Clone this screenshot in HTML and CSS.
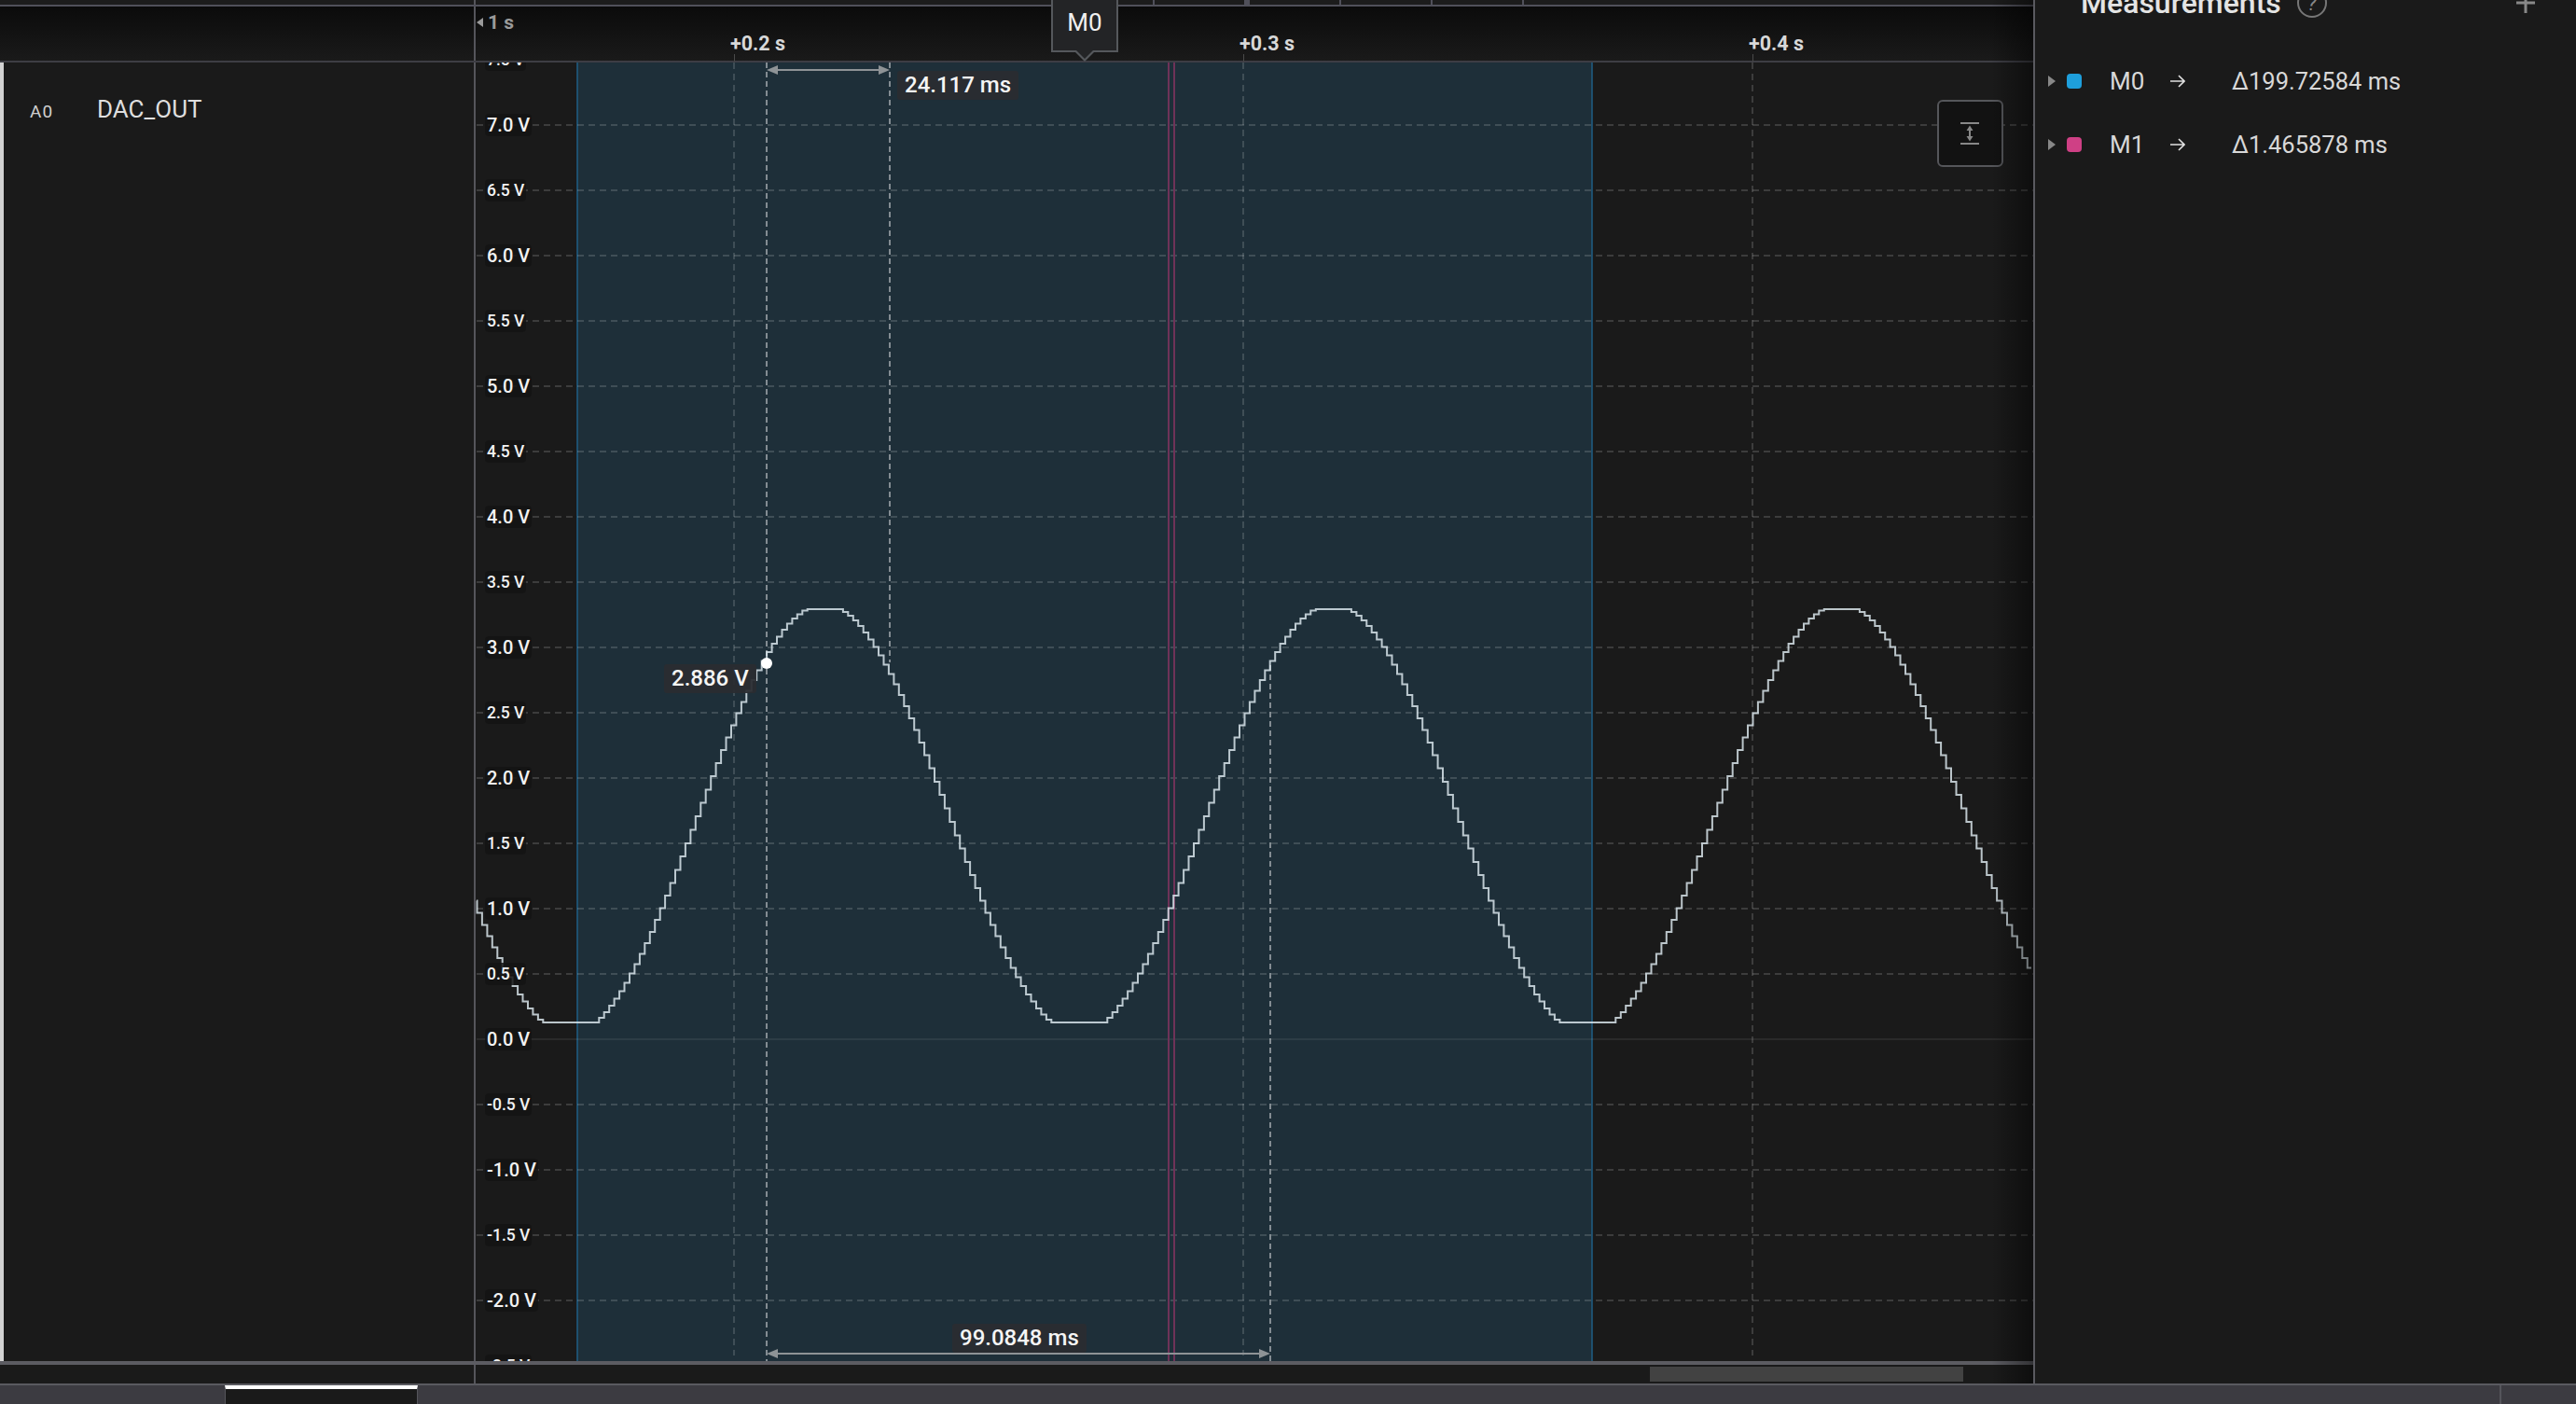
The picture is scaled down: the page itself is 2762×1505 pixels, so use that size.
FILE: index.html
```html
<!DOCTYPE html>
<html lang="en">
<head>
    <meta charset="UTF-8">
    <meta name="viewport" content="width=device-width, initial-scale=1.0">
    <title>Logic Analyzer Capture</title>
    <link rel="stylesheet" href="styles.css">
</head>
<body>
    <div class="main">
        <div class="capture">
            <div class="row strip">
                <div class="side"></div>
                <div class="strip-marks">
                    <span class="strip-mark"></span>
                    <span class="strip-mark thick"></span>
                    <span class="strip-mark"></span>
                    <span class="strip-mark"></span>
                    <span class="strip-mark"></span>
                </div>
            </div>

            <div class="row ruler">
                <div class="side"></div>
                <div class="ruler-track" id="rulerTrack">
                    <div class="ruler-origin"><span class="origin-arrow"></span>1 s</div>
                </div>
            </div>

            <div class="row traces">
                <div class="side channel">
                    <span class="channel-id">A0</span>
                    <span class="channel-name">DAC_OUT</span>
                </div>
                <div class="plot" id="plot">
                    <svg class="plot-svg" id="plotSvg" viewBox="510 67 1670 1392" width="1670" height="1392"></svg>
                    <div class="readout readout-top">24.117 ms</div>
                    <div class="readout readout-bottom">99.0848 ms</div>
                    <div class="readout readout-point">2.886 V</div>
                    <span class="point-dot"></span>
                    <button class="fit-button" aria-label="Fit height">
                        <svg width="22" height="26" viewBox="0 0 22 26">
                            <path class="fit-stroke" d="M1 2H21M1 24H21M11 7V19"/>
                            <path class="fit-fill" d="M11 4.500L14.500 10H7.500ZM11 21.500L14.500 16H7.500Z"/>
                        </svg>
                    </button>
                </div>
            </div>

            <div class="row scroller">
                <div class="side"></div>
                <div class="scroll-track"><span class="scroll-thumb"></span></div>
            </div>

            <div class="marker-flag">M0</div>
            <div class="edge-shade"></div>
        </div>

        <aside class="panel">
            <div class="panel-head">
                <h2 class="panel-title">Measurements</h2>
                <span class="help">?</span>
                <svg class="add" width="20" height="20" viewBox="0 0 20 20"><path d="M0 5H20M10 -5V16"/></svg>
            </div>
            <ul class="measures">
                <li class="measure">
                    <span class="caret"></span>
                    <span class="swatch swatch-blue"></span>
                    <span class="measure-name">M0</span>
                    <svg class="measure-arrow" width="16" height="14" viewBox="0 0 16 14"><path d="M0 7H15M9 1L15 7L9 13"/></svg>
                    <span class="measure-value">Δ199.72584 ms</span>
                </li>
                <li class="measure">
                    <span class="caret"></span>
                    <span class="swatch swatch-pink"></span>
                    <span class="measure-name">M1</span>
                    <svg class="measure-arrow" width="16" height="14" viewBox="0 0 16 14"><path d="M0 7H15M9 1L15 7L9 13"/></svg>
                    <span class="measure-value">Δ1.465878 ms</span>
                </li>
            </ul>
        </aside>
    </div>

    <div class="status">
        <span class="status-tab"></span>
        <span class="status-end"></span>
    </div>

    <script>
        const PLOT_X = 510;
        const PLOT_Y = 67;
        const SVG_NS = 'http://www.w3.org/2000/svg';
        const svg = document.getElementById('plotSvg');
        const plot = document.getElementById('plot');
        const rulerTrack = document.getElementById('rulerTrack');

        function addShape(tag, attrs) {
            const el = document.createElementNS(SVG_NS, tag);
            for (const key in attrs) {
                el.setAttribute(key, attrs[key]);
            }
            svg.appendChild(el);
            return el;
        }

        function voltY(v) {
            return 1114 - 140 * v;
        }

        // selected range
        addShape('rect', { x: 619, y: 67, width: 1088, height: 1392, class: 'range' });
        addShape('path', { d: 'M619 67V1459M1707 67V1459', class: 'range-edge' });

        // voltage grid and labels
        for (let i = 15; i >= -5; i--) {
            const v = i / 2;
            const y = voltY(v);
            addShape('path', { d: `M511 ${y}H2180`, class: v === 0 ? 'grid zero' : 'grid' });

            const label = document.createElement('div');
            label.className = i % 2 === 0 ? 'volt major' : 'volt';
            label.textContent = `${v.toFixed(1)} V`;
            label.style.top = `${y - PLOT_Y - 12}px`;
            plot.appendChild(label);
        }

        // time grid and labels
        [[787, '+0.2 s'], [1333, '+0.3 s'], [1879, '+0.4 s']].forEach(([x, text]) => {
            addShape('path', { d: `M${x} 67V1453`, class: 'grid' });

            const label = document.createElement('div');
            label.className = 'time';
            label.style.left = `${x - PLOT_X - 4}px`;
            label.textContent = text;
            rulerTrack.appendChild(label);
        });

        // DAC output, 100 samples per period, held between samples
        const PERIOD = 545;
        const STEP = PERIOD / 100;
        function sampleY(x) {
            const y = 878 - 230 * Math.cos(2 * Math.PI * (x - 881) / PERIOD);
            return Math.round(Math.max(653, Math.min(1096, y)) * 2) / 2;
        }
        let x = 1252.7;
        while (x - STEP > 511) {
            x -= STEP;
        }
        x -= STEP;
        let d = `M511 ${sampleY(x)}`;
        x += STEP;
        while (x < 2178) {
            d += `H${x.toFixed(1)}V${sampleY(x)}`;
            x += STEP;
        }
        d += 'H2178';

        addShape('path', { d: 'M1253 67V1459M1259 67V1459', class: 'marker-m1' });
        addShape('path', { d: 'M822 67V1459M954 67V710M1362 713V1459', class: 'cursor' });
        addShape('path', { d: d, class: 'wave' });

        // measurement arrows
        addShape('path', { d: 'M830 75H946', class: 'span-line' });
        addShape('path', { d: 'M822 75L834 70V80ZM954 75L942 70V80Z', class: 'span-head' });
        addShape('path', { d: 'M830 1451H1354', class: 'span-line' });
        addShape('path', { d: 'M822 1451L834 1446V1456ZM1362 1451L1350 1446V1456Z', class: 'span-head' });
    </script>
</body>
</html>
```

FILE: styles.css
```css
* {
    box-sizing: border-box;
}

html, body {
    height: 100%;
}

body {
    margin: 0;
    display: flex;
    flex-direction: column;
    overflow: hidden;
    background-color: #1a1a1a;
    color: #ddd;
    font-family: Roboto, "Liberation Sans", sans-serif;
}

.main {
    height: 1485px;
    display: flex;
    border-bottom: 2px solid #5a5a60;
}

.capture {
    position: relative;
    width: 2182px;
    display: flex;
    flex-direction: column;
    border-right: 2px solid #5a5a60;
}

.row {
    display: flex;
}

.side {
    width: 510px;
    flex-shrink: 0;
    border-right: 2px solid #55555b;
}

/* top strip */
.strip {
    height: 7px;
    background-color: #1c1c1c;
    border-bottom: 2px solid #50505a;
}

.strip-marks {
    display: flex;
    gap: 96px;
    margin-left: 726px;
}

.strip-mark {
    width: 2px;
    background-color: #50505a;
}

.strip-mark.thick {
    width: 6px;
}

/* time ruler */
.ruler {
    height: 60px;
    background: linear-gradient(#0b0b0b, #1a1a1a);
    border-bottom: 2px solid #3d3d44;
}

.ruler .side {
    border-right-color: #55555b;
}

.ruler-track {
    position: relative;
    flex: 1;
}

.ruler-origin {
    display: flex;
    align-items: center;
    gap: 5px;
    height: 34px;
    color: #9a9a9a;
    font-size: 21px;
    font-weight: 700;
}

.origin-arrow {
    width: 0;
    height: 0;
    margin-left: 1px;
    border-top: 5px solid transparent;
    border-bottom: 5px solid transparent;
    border-right: 7px solid #9a9a9a;
}

.time {
    position: absolute;
    top: 27px;
    color: #d8d8d8;
    font-size: 21.500px;
    font-weight: 700;
    line-height: 26px;
    white-space: nowrap;
}

.time::after {
    content: "";
    position: absolute;
    left: 4px;
    top: 24px;
    height: 8px;
    border-left: 1px solid #4a4a4a;
}

/* trace area */
.traces {
    height: 1396px;
    border-bottom: 4px solid #5c5c62;
}

.channel {
    display: flex;
    align-items: baseline;
    padding: 35px 0 0 28px;
    border-left: 4px solid #d2d2d2;
}

.channel-id {
    width: 72px;
    color: #cfcfcf;
    font-size: 19px;
    letter-spacing: 1px;
}

.channel-name {
    color: #dedede;
    font-size: 26px;
    line-height: 30px;
}

.plot {
    position: relative;
    flex: 1;
    overflow: hidden;
}

.plot-svg {
    position: absolute;
    left: 0;
    top: 0;
    display: block;
}

.range {
    fill: #1e2f39;
}

.range-edge {
    fill: none;
    stroke: #1f5f85;
    stroke-width: 1.5;
}

.grid {
    fill: none;
    stroke: rgba(255, 255, 255, 0.15);
    stroke-width: 2;
    stroke-dasharray: 7 5;
}

.grid.zero {
    stroke: rgba(255, 255, 255, 0.07);
    stroke-dasharray: none;
}

.marker-m1 {
    fill: none;
    stroke: #6e3358;
    stroke-width: 2;
}

.cursor {
    fill: none;
    stroke: rgba(255, 255, 255, 0.6);
    stroke-width: 1.5;
    stroke-dasharray: 6 4;
}

.wave {
    fill: none;
    stroke: rgba(228, 240, 246, 0.8);
    stroke-width: 2;
}

.span-line {
    fill: none;
    stroke: #8e9396;
    stroke-width: 2;
}

.span-head {
    fill: #8e9396;
}

.volt {
    position: absolute;
    left: 10px;
    padding: 0 2px;
    background-color: rgba(20, 20, 20, 0.85);
    border-radius: 4px;
    color: #f2f2f2;
    font-size: 17.500px;
    font-weight: 500;
    line-height: 24px;
    white-space: nowrap;
}

.volt.major {
    font-size: 20px;
}

.readout {
    position: absolute;
    height: 31px;
    padding: 0 8px;
    background-color: rgba(42, 45, 49, 0.94);
    border-radius: 3px;
    color: #f5f5f5;
    font-size: 24px;
    font-weight: 500;
    line-height: 31px;
    white-space: nowrap;
}

.readout-top {
    left: 452px;
    top: 9px;
}

.readout-bottom {
    left: 511px;
    top: 1352px;
}

.readout-point {
    left: 202px;
    top: 645px;
}

.point-dot {
    position: absolute;
    left: 306px;
    top: 638px;
    width: 12px;
    height: 12px;
    border-radius: 50%;
    background-color: #fff;
}

.fit-button {
    position: absolute;
    left: 1567px;
    top: 40px;
    width: 71px;
    height: 72px;
    display: flex;
    align-items: center;
    justify-content: center;
    padding: 0 2px 0 0;
    background-color: #121212;
    border: 2px solid #55565a;
    border-radius: 6px;
}

.fit-stroke {
    fill: none;
    stroke: #888;
    stroke-width: 2;
}

.fit-fill {
    fill: #888;
}

/* horizontal scroll */
.scroller {
    height: 20px;
}

.scroll-track {
    flex: 1;
    padding: 2px 0 2px 1259px;
}

.scroll-thumb {
    display: block;
    width: 336px;
    height: 16px;
    background-color: #424242;
}

/* M0 flag on the ruler */
.marker-flag {
    position: absolute;
    left: 1127px;
    top: 0;
    width: 72px;
    height: 56px;
    padding-bottom: 6px;
    display: flex;
    align-items: center;
    justify-content: center;
    background-color: #232426;
    border: 2px solid #55585c;
    border-top: none;
    color: #f0f0f0;
    font-size: 26px;
}

.marker-flag::before,
.marker-flag::after {
    content: "";
    position: absolute;
    left: 50%;
    top: 100%;
    margin-left: -12px;
    border-left: 12px solid transparent;
    border-right: 12px solid transparent;
    border-top: 12px solid #55585c;
}

.marker-flag::after {
    margin-top: -3px;
    border-top-color: #232426;
}

.edge-shade {
    position: absolute;
    right: 0;
    top: 0;
    bottom: 0;
    width: 45px;
    background: linear-gradient(to right, rgba(0, 0, 0, 0), rgba(0, 0, 0, 0.45));
    pointer-events: none;
}

/* measurements panel */
.panel {
    flex: 1;
    overflow: hidden;
}

.panel-head {
    position: relative;
    height: 6px;
    display: flex;
    align-items: center;
    padding-left: 49px;
}

.panel-title {
    margin: 0;
    color: #e4e4e4;
    font-size: 32px;
    font-weight: 500;
    white-space: nowrap;
}

.help {
    width: 32px;
    height: 32px;
    margin-left: 17px;
    flex-shrink: 0;
    display: flex;
    align-items: center;
    justify-content: center;
    border: 2px solid #777;
    border-radius: 50%;
    color: #888;
    font-size: 22px;
    font-style: italic;
}

.add {
    position: absolute;
    left: 516px;
    top: -2px;
    overflow: visible;
}

.add path {
    fill: none;
    stroke: #888;
    stroke-width: 3;
}

.measures {
    list-style: none;
    margin: 47px 0 0;
    padding: 0;
}

.measure {
    height: 68px;
    display: flex;
    align-items: center;
    padding-left: 14px;
    color: #d8d8d8;
}

.caret {
    width: 0;
    height: 0;
    border-top: 6px solid transparent;
    border-bottom: 6px solid transparent;
    border-left: 8px solid #888;
}

.swatch {
    width: 16px;
    height: 16px;
    margin-left: 12px;
    border-radius: 4px;
}

.swatch-blue {
    background-color: #1e9fdc;
}

.swatch-pink {
    background-color: #cf4085;
}

.measure-name {
    width: 65px;
    margin-left: 30px;
    font-size: 26px;
}

.measure-arrow {
    width: 16px;
    margin-right: 50px;
}

.measure-arrow path {
    fill: none;
    stroke: #e0e0e0;
    stroke-width: 1.6;
}

.measure-value {
    font-size: 25.500px;
}

/* bottom status bar */
.status {
    flex: 1;
    display: flex;
    background-color: #3c3b41;
}

.status-tab {
    width: 207px;
    margin-left: 241px;
    background-color: #1a1a1a;
    border-top: 4px solid #fff;
    border-left: 1px solid #55555b;
    border-right: 1px solid #55555b;
}

.status-end {
    width: 82px;
    margin-left: auto;
    border-left: 2px solid #55555b;
}
```
